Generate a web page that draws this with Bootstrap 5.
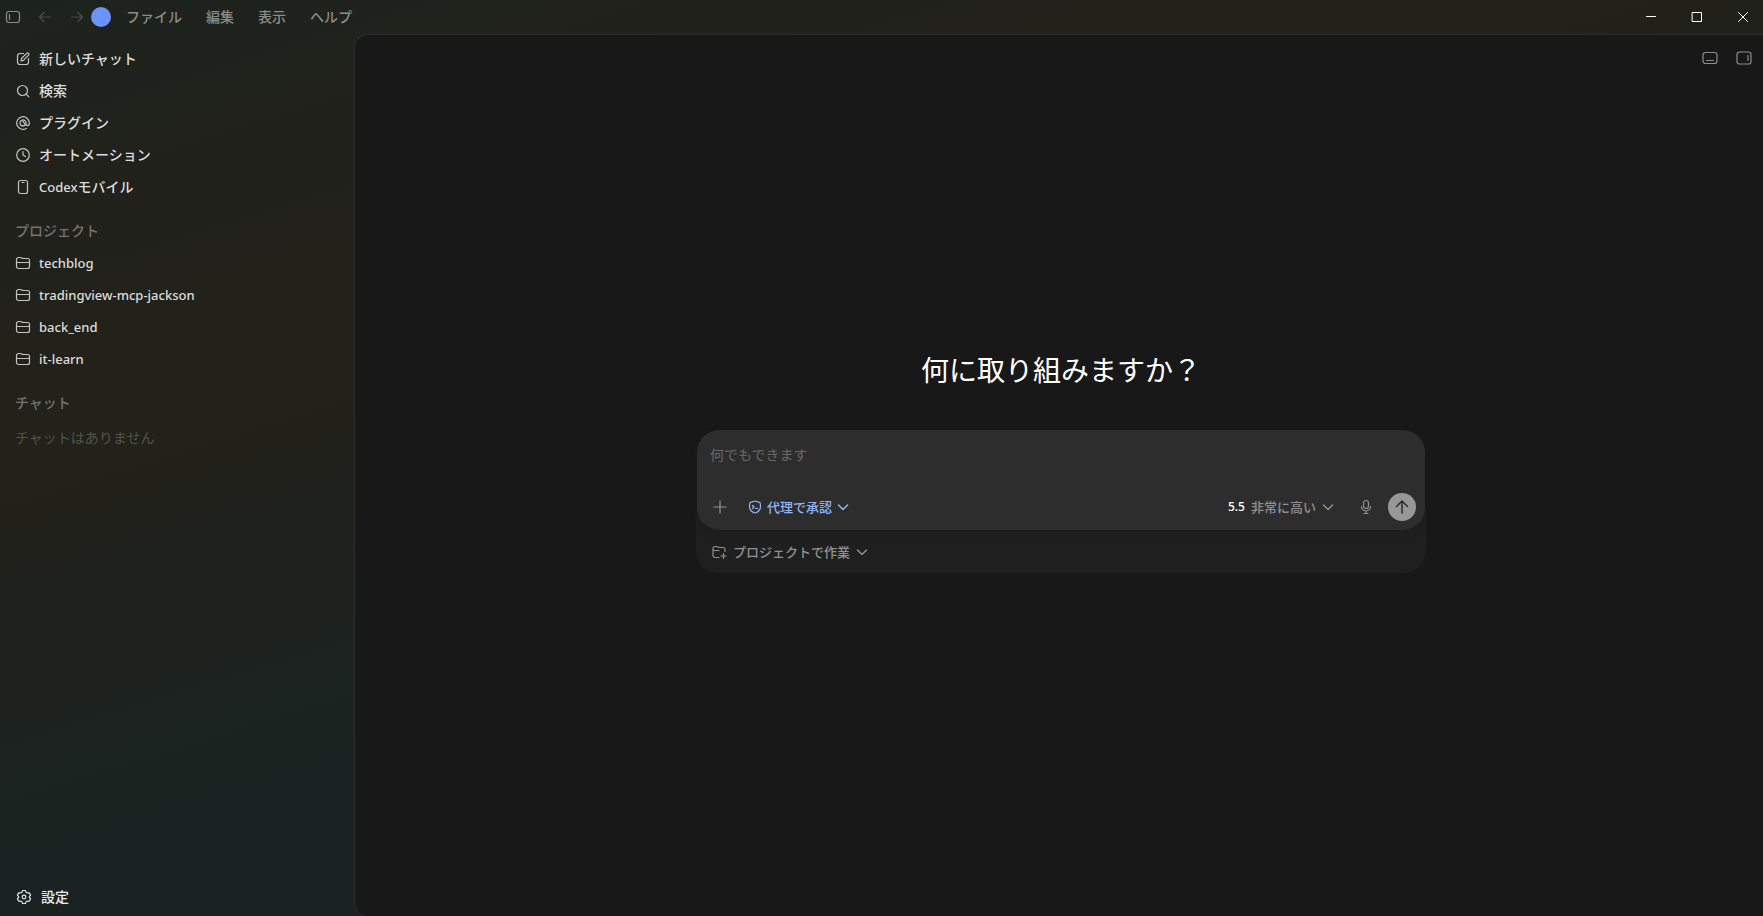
<!DOCTYPE html>
<html lang="ja" data-bs-theme="dark">
<head>
<meta charset="utf-8">
<meta name="viewport" content="width=device-width, initial-scale=1">
<title>Codex</title>
<link href="https://cdn.jsdelivr.net/npm/bootstrap@5.3.0/dist/css/bootstrap.min.css" rel="stylesheet">
<style>
body{font-family:"Noto Sans","Noto Sans CJK JP",sans-serif;font-size:14px;line-height:20px;color:#dcdcda;
 background:linear-gradient(163deg,#1c231e 0%,#20221c 10%,#22211b 22%,#22211a 34%,#1f211d 43%,#1c2321 53%,#1b2322 60%,#1b2322 100%)}
button{font-weight:500}
svg{flex:none;fill:none;stroke:currentColor;stroke-width:1.2;stroke-linecap:round;stroke-linejoin:round}
.latin{font-size:13px;font-weight:500}
.plain{background:none;border:0;padding:0;color:inherit;display:inline-flex;align-items:center;justify-content:center;text-decoration:none}
.titlebar{height:34px;padding-left:5px;color:#8b8c88}
.history{color:#4b4d48}
.avatar{width:20px;height:20px;border-radius:50%;background:#6b93fb;margin-left:6px;margin-right:3px}
.menu-item{padding:0 12px}
.window-controls{gap:6px}
.winctl{width:40px;height:34px;color:#fff}
.winctl svg{stroke-width:1}
.sidebar{width:354px;padding:9px 15px 3px}
.side-item{height:32px;gap:8px;justify-content:flex-start;width:100%}
.side-item svg{color:#c4c5c1}
.section-title{height:32px;margin:12px 0 0;font-size:14px;font-weight:500;color:#72736c}
.empty{height:32px;margin-top:3px;color:#53534b}
.settings{gap:9px;padding-left:1px;color:#eee}
.settings svg{color:#e2e2e2}
.stage{background:#181818;border:1px solid #2c2e2b;border-width:1px 0 0 1px;border-radius:14px 0 0 14px}
.stage-tools{height:46px;padding-right:11px;gap:18px;color:#8d8d8d}
.center{padding-bottom:72px;padding-left:4px}
.center h1{font-size:28px;line-height:36px;font-weight:400;color:#fff;margin:0 0 42px}
.shell{width:730px;max-width:100%}
.composer{z-index:1;margin:0 1px;border-radius:22px;background:#2d2d2d;padding:15px 9px 9px 13px;box-shadow:0 4px 10px rgba(0,0,0,.1)}
.prompt{display:block;width:100%;height:20px;margin-bottom:28px;padding:0;border:0;background:none;resize:none;outline:0;color:#eee;overflow:hidden}
.prompt::placeholder{color:#696969;opacity:1}
.tools{height:28px;font-size:13px;color:#919191}
.chevron{stroke-width:1.5}
.approve{color:#93b4f8;gap:5px;margin-left:18px}
.model{gap:6px}
.model .latin{font-size:12px;color:#fff}
.send{width:28px;height:28px;border-radius:50%;background:#979797;color:#2d2d2d;margin-left:14px}
.send svg{stroke-width:1.5}
.workbar{margin-top:-20px;padding:20px 15px 0;height:63px;border-radius:0 0 22px 22px;background:#1f1f1f;color:#919191;font-size:13px}
.workbar .plain{gap:6px}
</style>
</head>
<body class="vh-100 d-flex flex-column overflow-hidden">
<header class="titlebar d-flex align-items-center">
  <button class="plain" aria-label="サイドバー"><svg width="16" height="16" viewBox="0 0 16 16"><rect x="1.5" y="2.5" width="13" height="11" rx="2.5"/><path d="M4.5 5.500v5"/></svg></button>
  <button class="plain history ms-3" aria-label="戻る"><svg width="16" height="16" viewBox="0 0 16 16"><path d="M13.500 8H2.500M7 3.500 2.500 8 7 12.500"/></svg></button>
  <button class="plain history ms-3" aria-label="進む"><svg width="16" height="16" viewBox="0 0 16 16"><path d="M2.500 8h11M9 3.500 13.500 8 9 12.500"/></svg></button>
  <span class="avatar"></span>
  <nav class="d-flex" aria-label="メニュー">
    <button class="plain menu-item">ファイル</button><button class="plain menu-item">編集</button><button class="plain menu-item">表示</button><button class="plain menu-item">ヘルプ</button>
  </nav>
  <div class="window-controls d-flex ms-auto">
    <button class="plain winctl" aria-label="最小化"><svg width="12" height="12" viewBox="0 0 12 12"><path d="M1.500 5.500h9"/></svg></button>
    <button class="plain winctl" aria-label="最大化"><svg width="12" height="12" viewBox="0 0 12 12"><rect x="1.500" y="1.500" width="9" height="9"/></svg></button>
    <button class="plain winctl" aria-label="閉じる"><svg width="12" height="12" viewBox="0 0 12 12"><path d="m1.500 1.500 9 9m0-9-9 9"/></svg></button>
  </div>
</header>
<div class="d-flex flex-grow-1">
  <aside class="sidebar d-flex flex-column flex-shrink-0">
    <nav class="d-flex flex-column">
      <button class="plain side-item"><svg width="16" height="16" viewBox="0 0 16 16"><path d="M8.500 2.500H5A2.500 2.500 0 0 0 2.500 5v6A2.500 2.500 0 0 0 5 13.500h6a2.500 2.500 0 0 0 2.500-2.500V7.500M6 10l.5-2.500 5.200-5.200a1.300 1.300 0 0 1 1.900 1.900L8.500 9.400 6 10Z"/></svg>新しいチャット</button>
      <button class="plain side-item"><svg width="16" height="16" viewBox="0 0 16 16"><circle cx="7.500" cy="7.500" r="5"/><path d="m11.200 11.200 2.600 2.600"/></svg>検索</button>
      <button class="plain side-item"><svg width="16" height="16" viewBox="0 0 16 16"><path d="M11.300 13.400A6.300 6.300 0 1 1 14.300 8c0 1.600-.7 2.700-1.800 2.700-1 0-1.500-.7-1.500-1.700V8a3 3 0 1 0-.8 2M5.800 10.600h3.800M8 6.300 9.800 9"/></svg>プラグイン</button>
      <button class="plain side-item"><svg width="16" height="16" viewBox="0 0 16 16"><circle cx="8" cy="8" r="6.300"/><path d="M8 4.500V8l2.500 1.500"/></svg>オートメーション</button>
      <button class="plain side-item"><svg width="16" height="16" viewBox="0 0 16 16"><rect x="3.500" y="1.500" width="9" height="13" rx="2"/><path d="M7 3.500h2"/></svg><span><span class="latin">Codex</span>モバイル</span></button>
    </nav>
    <h2 class="section-title d-flex align-items-center">プロジェクト</h2>
    <nav class="d-flex flex-column">
      <button class="plain side-item"><svg width="16" height="16" viewBox="0 0 16 16"><path d="M1.500 11.500v-7a2 2 0 0 1 2-2h1.700c1.600 0 1.600 1 3.300 1h4a2 2 0 0 1 2 2v6a2 2 0 0 1-2 2h-9a2 2 0 0 1-2-2ZM1.500 7.500h13"/></svg><span class="latin">techblog</span></button>
      <button class="plain side-item"><svg width="16" height="16" viewBox="0 0 16 16"><path d="M1.500 11.500v-7a2 2 0 0 1 2-2h1.700c1.600 0 1.600 1 3.300 1h4a2 2 0 0 1 2 2v6a2 2 0 0 1-2 2h-9a2 2 0 0 1-2-2ZM1.500 7.500h13"/></svg><span class="latin">tradingview-mcp-jackson</span></button>
      <button class="plain side-item"><svg width="16" height="16" viewBox="0 0 16 16"><path d="M1.500 11.500v-7a2 2 0 0 1 2-2h1.700c1.600 0 1.600 1 3.300 1h4a2 2 0 0 1 2 2v6a2 2 0 0 1-2 2h-9a2 2 0 0 1-2-2ZM1.500 7.500h13"/></svg><span class="latin">back_end</span></button>
      <button class="plain side-item"><svg width="16" height="16" viewBox="0 0 16 16"><path d="M1.500 11.500v-7a2 2 0 0 1 2-2h1.700c1.600 0 1.600 1 3.300 1h4a2 2 0 0 1 2 2v6a2 2 0 0 1-2 2h-9a2 2 0 0 1-2-2ZM1.500 7.500h13"/></svg><span class="latin">it-learn</span></button>
    </nav>
    <h2 class="section-title d-flex align-items-center">チャット</h2>
    <div class="empty d-flex align-items-center">チャットはありません</div>
    <button class="plain side-item settings mt-auto"><svg width="16" height="16" viewBox="0 0 16 16"><path d="M6.600 1.500h2.800l.7 1.800 1.200.7 1.900-.3 1.400 2.400L13.400 7.500v1l1.200 1.400-1.400 2.400-1.900-.3-1.200.7-.7 1.800H6.600l-.7-1.800-1.200-.7-1.900.3-1.400-2.400 1.200-1.400v-1L1.400 6.100l1.400-2.400 1.900.3 1.200-.7Z"/><circle cx="8" cy="8" r="1.800"/></svg>設定</button>
  </aside>
  <main class="stage d-flex flex-column flex-grow-1">
    <div class="stage-tools d-flex align-items-center justify-content-end">
      <button class="plain" aria-label="下パネル"><svg width="16" height="16" viewBox="0 0 16 16"><rect x="1" y="2.500" width="14" height="11" rx="2.500"/><path d="M4.500 10.500h7"/></svg></button>
      <button class="plain" aria-label="右パネル"><svg width="16" height="16" viewBox="0 0 16 16"><rect x="1" y="2" width="14" height="12" rx="2.500"/><path d="M12 5.500v5"/></svg></button>
    </div>
    <div class="center d-flex flex-column flex-grow-1 align-items-center justify-content-center">
      <h1>何に取り組みますか？</h1>
      <div class="shell">
        <form class="composer position-relative">
          <textarea class="prompt" rows="1" placeholder="何でもできます" aria-label="何でもできます"></textarea>
          <div class="tools d-flex align-items-center">
            <button type="button" class="plain" aria-label="追加"><svg width="20" height="20" viewBox="0 0 20 20"><path d="M10 4v12M4 10h12"/></svg></button>
            <button type="button" class="plain approve"><svg width="14" height="14" viewBox="0 0 14 14"><path d="M7 1 12 2.600c.6 2.200.6 4.500 0 6.400C11.200 11 9.200 12.500 7 13 4.800 12.500 2.800 11 2 9c-.6-1.900-.6-4.200 0-6.400ZM4.500 5.500 6 7 4.500 8.500M7.500 8.500h2.200"/></svg>代理で承認<svg class="chevron" width="12" height="12" viewBox="0 0 12 12"><path d="m1.500 4 4.500 4.500L10.500 4"/></svg></button>
            <button type="button" class="plain model ms-auto"><span class="latin">5.5</span>非常に高い<svg class="chevron" width="12" height="12" viewBox="0 0 12 12"><path d="m1.500 4 4.500 4.500L10.500 4"/></svg></button>
            <button type="button" class="plain ms-4" aria-label="音声入力"><svg width="16" height="16" viewBox="0 0 16 16"><rect x="5.500" y="1.500" width="5" height="8" rx="2.500"/><path d="M3.500 7.500a4.500 4.500 0 0 0 9 0M8 12v2M6 14.500h4"/></svg></button>
            <button type="submit" class="plain send" aria-label="送信"><svg width="16" height="16" viewBox="0 0 16 16"><path d="M8 14V2M2.500 7.500 8 2l5.500 5.500"/></svg></button>
          </div>
        </form>
        <div class="workbar d-flex align-items-center">
          <button class="plain"><svg width="16" height="16" viewBox="0 0 16 16"><path d="M8 13.500H4a2 2 0 0 1-2-2v-7a2 2 0 0 1 2-2h1.300c1.600 0 1.600 1 3.200 1H12a2 2 0 0 1 2 2v2M2 6.500h6M12.500 9.500v5M10 12h5"/></svg>プロジェクトで作業<svg class="chevron" width="12" height="12" viewBox="0 0 12 12"><path d="m1.500 4 4.500 4.500L10.500 4"/></svg></button>
        </div>
      </div>
    </div>
  </main>
</div>
<script src="https://cdn.jsdelivr.net/npm/bootstrap@5.3.0/dist/js/bootstrap.bundle.min.js"></script>
</body>
</html>
